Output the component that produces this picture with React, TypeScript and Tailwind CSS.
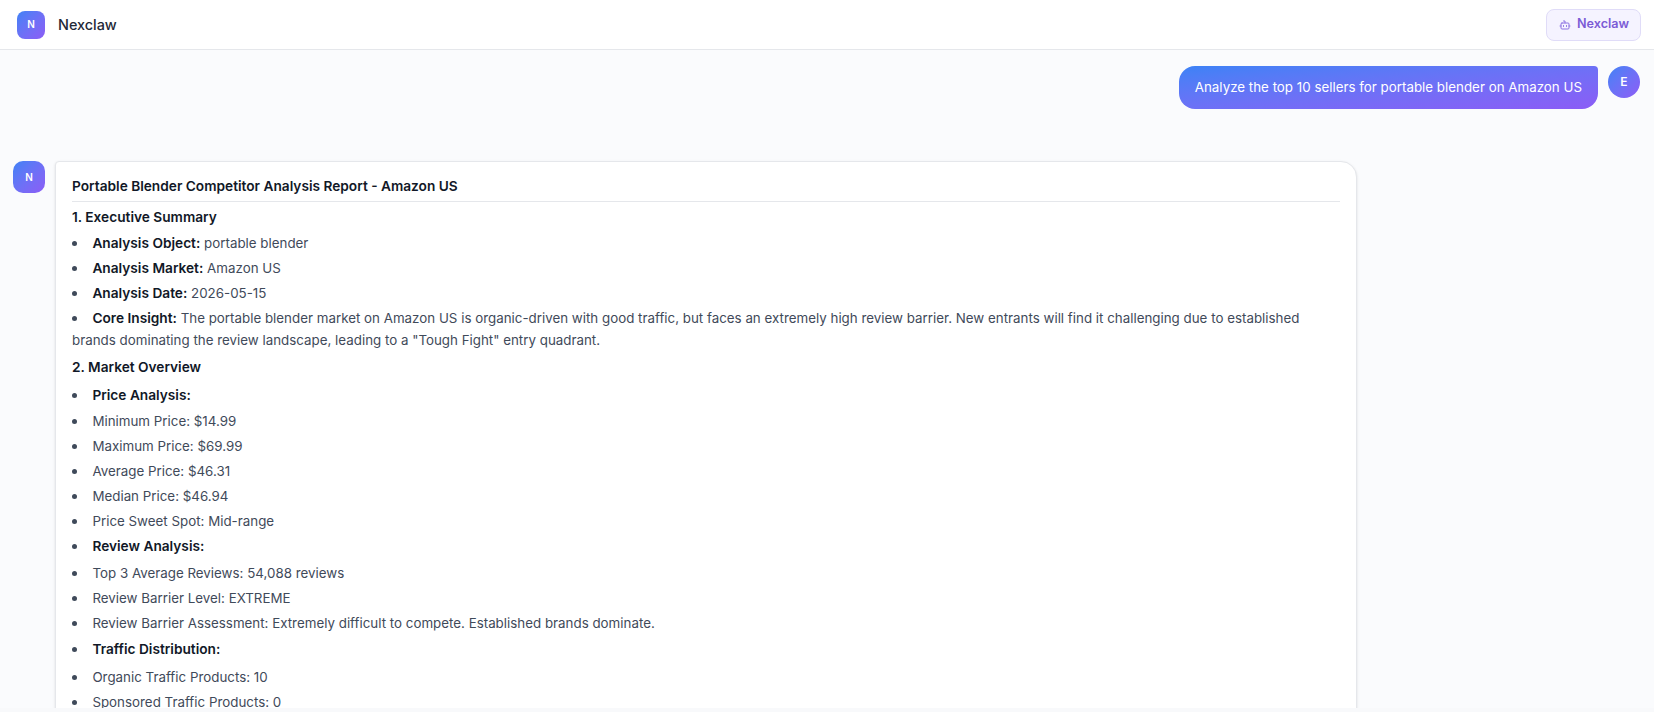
import React from 'react';

const Bullet = ({ children, className = 'mb-[3px]' }: { children: React.ReactNode; className?: string }) => (
  <li className={`leading-[21px] ${className}`}>{children}</li>
);

const Strong = ({ children }: { children: React.ReactNode }) => (
  <strong className="text-[13.7px] font-semibold text-[#111827]">{children}</strong>
);

const App: React.FC = () => {
  return (
    <div className="h-[712px] flex flex-col overflow-hidden bg-[#fafbfd] font-['Inter',sans-serif] text-[13.35px] text-[#3f4a5a]">
      <header className="h-[50px] shrink-0 bg-white border-b border-[#e5e7eb] flex items-center justify-between pl-[17px] pr-[13px]">
        <div className="flex items-center gap-[13px]">
          <div className="w-7 h-7 rounded-lg bg-gradient-to-br from-[#3b82f6] to-[#8b5cf6] flex items-center justify-center text-white text-[10px] font-semibold">N</div>
          <span className="text-[14.4px] font-medium text-[#1f2937]">Nexclaw</span>
        </div>
        <div className="h-8 w-[95px] px-3 flex items-center gap-[6px] rounded-lg border border-[#e0dcf8] bg-[#f5f3ff] text-[#7c5cd6] text-[12.6px] font-semibold">
          <svg className="shrink-0 text-[#8f74e2]" width="12" height="12" viewBox="0 0 24 24" fill="none" stroke="currentColor" strokeWidth="2" strokeLinecap="round" strokeLinejoin="round">
            <path d="M12 8V4H9" />
            <rect width="16" height="12" x="4" y="8" rx="2" />
            <path d="M2 14h2" />
            <path d="M20 14h2" />
            <path d="M15 13v2" />
            <path d="M9 13v2" />
          </svg>
          Nexclaw
        </div>
      </header>

      <main className="h-[658px] shrink-0 overflow-hidden flex flex-col pt-4 pl-[13px] pr-[14px]">
        <div className="flex justify-end items-start gap-[10px]">
          <div className="h-[43px] px-4 flex items-center rounded-2xl rounded-tr-sm bg-gradient-to-br from-[#3b82f6] to-[#8b5cf6] text-white leading-[21px]">
            Analyze the top 10 sellers for portable blender on Amazon US
          </div>
          <div className="w-8 h-8 rounded-full bg-gradient-to-br from-[#3b82f6] to-[#8b5cf6] flex items-center justify-center text-white text-xs font-semibold">E</div>
        </div>

        <div className="flex items-start gap-[10px] mt-[52px]">
          <div className="w-8 h-8 shrink-0 rounded-[10px] bg-gradient-to-br from-[#3b82f6] to-[#8b5cf6] flex items-center justify-center text-white text-[10px] font-semibold">N</div>
          <div className="w-[1302px] bg-white border border-[#e5e7eb] rounded-2xl rounded-tl-sm shadow-sm px-4 pt-[14px] pb-4">
            <h1 className="text-[13.7px] font-semibold text-[#111827] leading-[21px] pb-1 border-b border-[#e5e7eb] mb-[5px]">Portable Blender Competitor Analysis Report - Amazon US</h1>
            <h2 className="text-[13.7px] font-semibold text-[#111827] leading-[21px] mb-[4px]">1. Executive Summary</h2>
            <ul className="list-disc list-inside marker:text-[14.4px]">
              <Bullet><Strong>Analysis Object:</Strong> portable blender</Bullet>
              <Bullet><Strong>Analysis Market:</Strong> Amazon US</Bullet>
              <Bullet><Strong>Analysis Date:</Strong> 2026-05-15</Bullet>
              <li className="leading-[22px] mb-[6px]">
                <Strong>Core Insight:</Strong> The portable blender market on Amazon US is organic-driven with good traffic, but faces an extremely high review barrier. New entrants will find it challenging due to established brands dominating the review landscape, leading to a "Tough Fight" entry quadrant.
              </li>
            </ul>
            <h2 className="text-[13.7px] font-semibold text-[#111827] leading-[21px] mb-[6px]">2. Market Overview</h2>
            <ul className="list-disc list-inside marker:text-[14.4px]">
              <Bullet className="mb-1"><Strong>Price Analysis:</Strong></Bullet>
              <Bullet>Minimum Price: $14.99</Bullet>
              <Bullet>Maximum Price: $69.99</Bullet>
              <Bullet>Average Price: $46.31</Bullet>
              <Bullet>Median Price: $46.94</Bullet>
              <Bullet>Price Sweet Spot: Mid-range</Bullet>
              <Bullet className="mb-[5px]"><Strong>Review Analysis:</Strong></Bullet>
              <Bullet>Top 3 Average Reviews: 54,088 reviews</Bullet>
              <Bullet>Review Barrier Level: EXTREME</Bullet>
              <Bullet className="mb-1">Review Barrier Assessment: Extremely difficult to compete. Established brands dominate.</Bullet>
              <Bullet className="mb-[6px]"><Strong>Traffic Distribution:</Strong></Bullet>
              <Bullet>Organic Traffic Products: 10</Bullet>
              <Bullet>Sponsored Traffic Products: 0</Bullet>
            </ul>
          </div>
        </div>
      </main>
      <div className="h-1 shrink-0 bg-[#f8f9fb]"></div>
    </div>
  );
};

export default App;
